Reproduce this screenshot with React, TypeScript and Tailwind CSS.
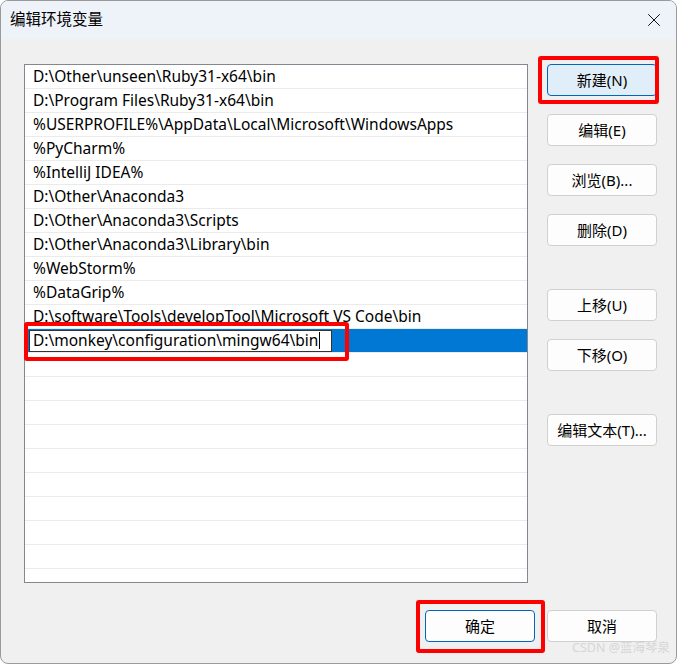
import { X } from 'lucide-react';

const paths = [
  'D:\\Other\\unseen\\Ruby31-x64\\bin',
  'D:\\Program Files\\Ruby31-x64\\bin',
  '%USERPROFILE%\\AppData\\Local\\Microsoft\\WindowsApps',
  '%PyCharm%',
  '%IntelliJ IDEA%',
  'D:\\Other\\Anaconda3',
  'D:\\Other\\Anaconda3\\Scripts',
  'D:\\Other\\Anaconda3\\Library\\bin',
  '%WebStorm%',
  '%DataGrip%',
  'D:\\software\\Tools\\developTool\\Microsoft VS Code\\bin',
];

const font = { fontFamily: '"Noto Sans", "Noto Sans CJK SC", sans-serif' };

function DlgButton({ label, primary, focused }: { label: string; primary?: boolean; focused?: boolean }) {
  const tone = primary
    ? 'bg-[#e0eef9] border-[#0067c0]'
    : focused
      ? 'bg-[#fdfdfd] border-[#0067c0]'
      : 'bg-[#fdfdfd] border-[#d0d0d0]';
  return (
    <button className={`w-[110px] h-[32px] rounded-[4px] border text-[15px] leading-none text-black flex items-center justify-center ${tone}`}>
      {label}
    </button>
  );
}

export default function App() {
  return (
    <div className="w-[677px] h-[664px] bg-white overflow-hidden" style={font}>
      <div className="relative w-[677px] h-[664px] flex flex-col rounded-[8px] border border-[#9a9a9a] overflow-hidden bg-[#f0f0f0]">
        <div className="h-[38px] bg-[#eef2f9] flex items-center justify-between pl-[9px] pr-[11px] shrink-0">
          <span className="text-[15.5px] text-black">编辑环境变量</span>
          <X className="w-[22px] h-[22px] text-black" strokeWidth={1} />
        </div>

        <div className="flex flex-1 pl-[23px] pt-[25px]">
          <div className="w-[504px] h-[519px] border border-[#828790] bg-white overflow-hidden">
            {paths.map((p) => (
              <div key={p} className="h-[24px] border-b border-[#ebebeb] pl-[8px] flex items-center text-[15.5px] leading-none text-black whitespace-nowrap">
                {p}
              </div>
            ))}
            <div className="h-[24px] bg-[#0078d4] border-b border-[#ebebeb] pl-[4px] flex items-center">
              <div className="w-[303px] h-[22px] bg-white border border-[#333] pl-[3px] flex items-center text-[15.5px] leading-none text-black whitespace-nowrap">
                D:\monkey\configuration\mingw64\bin
                <span className="inline-block w-px h-[17px] bg-black ml-[1px]" />
              </div>
            </div>
            {Array.from({ length: 11 }).map((_, i) => (
              <div key={i} className="h-[24px] border-b border-[#ebebeb]" />
            ))}
          </div>

          <div className="ml-[19px] flex flex-col">
            <div className="flex flex-col gap-[18px]">
              <DlgButton label="新建(N)" primary />
              <DlgButton label="编辑(E)" />
              <DlgButton label="浏览(B)..." />
              <DlgButton label="删除(D)" />
            </div>
            <div className="flex flex-col gap-[18px] mt-[43px]">
              <DlgButton label="上移(U)" />
              <DlgButton label="下移(O)" />
            </div>
            <div className="mt-[43px]">
              <DlgButton label="编辑文本(T)..." />
            </div>
          </div>
        </div>

        <div className="absolute left-[424px] top-[609px] flex gap-[12px]">
          <DlgButton label="确定" focused />
          <DlgButton label="取消" />
        </div>

        {/* red annotation boxes */}
        <div className="absolute left-[537px] top-[55px] w-[121px] h-[48px] border-[4px] border-[#ff0000] rounded-[3px]" />
        <div className="absolute left-[23px] top-[321px] w-[325px] h-[39px] border-[4px] border-[#ff0000] rounded-[3px]" />
        <div className="absolute left-[415px] top-[599px] w-[129px] h-[53px] border-[4px] border-[#ff0000] rounded-[3px]" />

        <div className="absolute right-[6px] bottom-[5px] text-[12.5px] text-[#d6d6d6]">CSDN @蓝海琴泉</div>
      </div>
    </div>
  );
}
